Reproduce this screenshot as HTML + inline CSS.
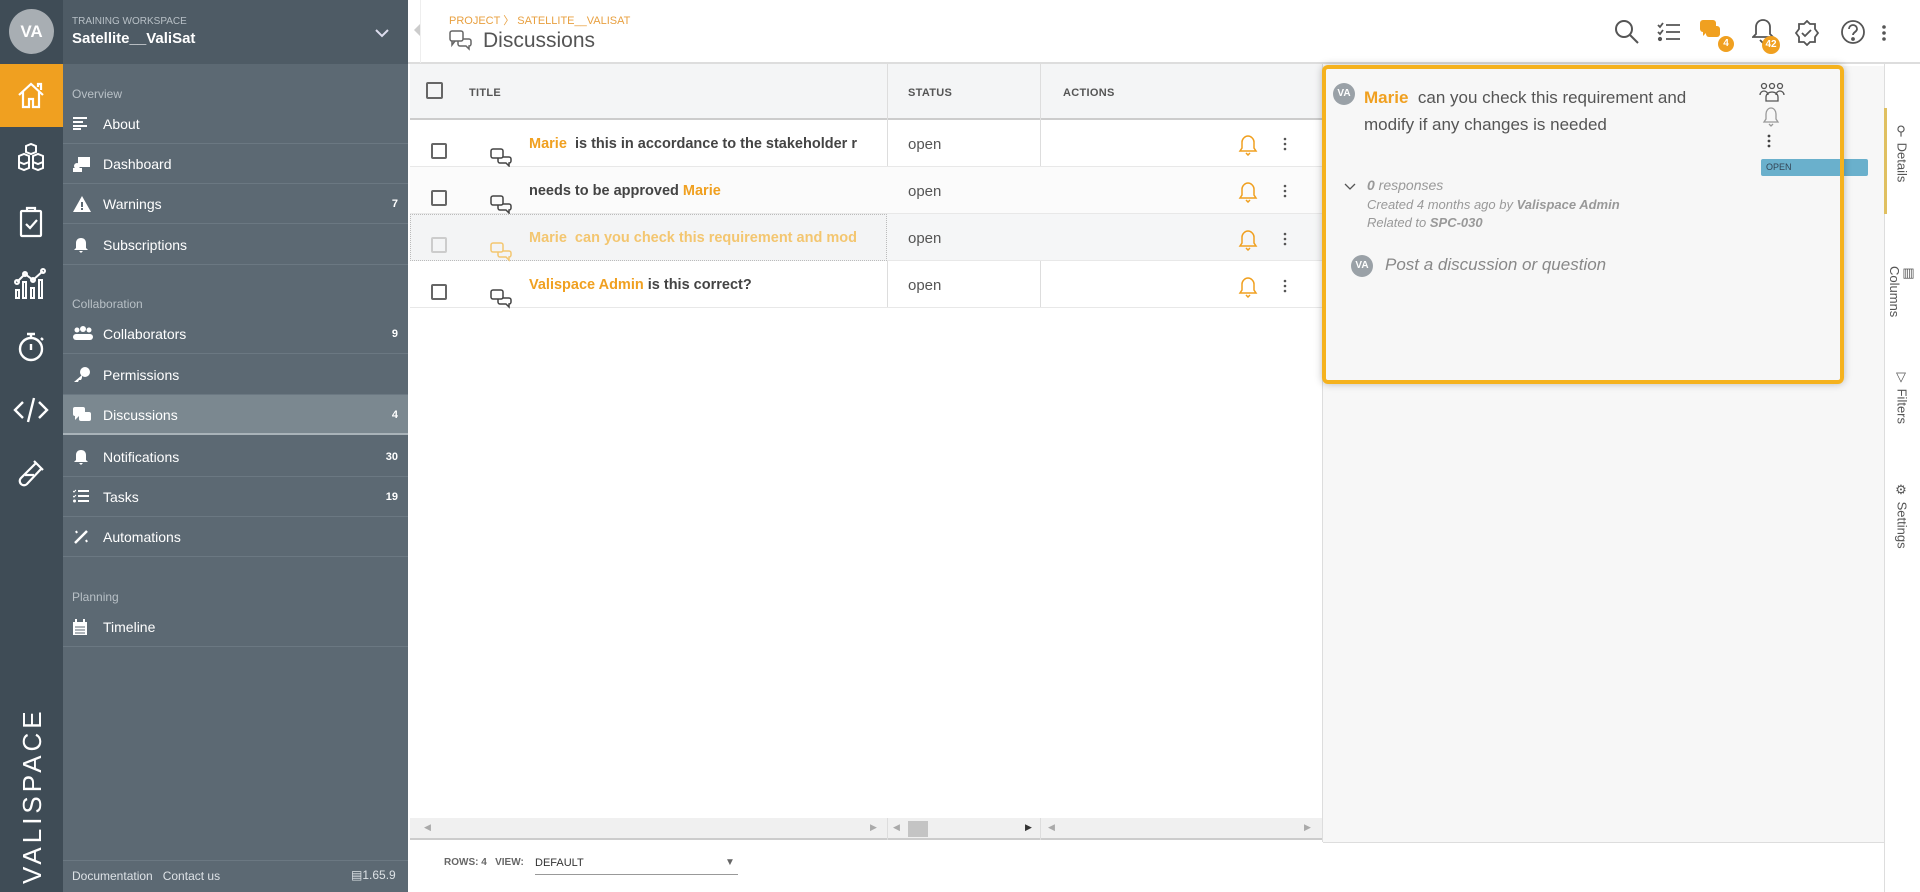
<!DOCTYPE html>
<html><head><meta charset="utf-8"><style>
*{box-sizing:border-box;margin:0;padding:0}
body{width:1920px;height:892px;overflow:hidden;font-family:"Liberation Sans",sans-serif;background:#fff;position:relative}
.a{position:absolute}
.rail{left:0;top:0;width:63px;height:892px;background:#3f4c56}
.side{left:63px;top:0;width:345px;height:892px;background:#5c6973}
.sh{left:63px;top:0;width:345px;height:64px;background:#4e5b65}
.nav{position:absolute;left:63px;width:345px;height:40px;border-bottom:1px solid #6b7882;color:#fff;font-size:14px;line-height:40px;padding-left:40px}
.nav .n{position:absolute;right:10px;top:0;font-size:11px;font-weight:bold}
.nav svg{position:absolute;left:10px;top:12px}
.lbl{position:absolute;left:72px;color:#b8c0c6;font-size:12px}
.hdr{font-size:11px;font-weight:bold;color:#555;letter-spacing:.3px}
.row{position:absolute;left:410px;width:912px;height:47px;border-bottom:1px solid #e8e8e8}
.cb{position:absolute;left:20px;top:24px;width:16px;height:16px;border:2px solid #666;border-radius:2px}
.tt{position:absolute;left:119px;top:16px;font-size:14.5px;font-weight:bold;color:#444;white-space:nowrap}
.o{color:#f0a020}
.st{position:absolute;left:498px;top:16px;font-size:15px;color:#555}
.tab{position:absolute;left:1884px;width:36px;color:#555;font-size:13px;writing-mode:vertical-rl;display:flex;align-items:center;justify-content:center}
</style></head><body>
<div class="a rail"></div>
<div class="a side"></div>
<div class="a sh"></div>
<div class="a" style="left:9px;top:9px;width:45px;height:45px;border-radius:50%;background:#a8aeb3;color:#fff;font-weight:bold;font-size:17px;line-height:45px;text-align:center">VA</div>
<div class="a" style="left:72px;top:16px;color:#b8c0c6;font-size:10px">TRAINING WORKSPACE</div>
<div class="a" style="left:72px;top:30px;color:#fff;font-size:15px;font-weight:bold">Satellite__ValiSat</div>
<svg class="a" style="left:375px;top:28px" width="14" height="10"><path d="M1 2l6 6 6-6" stroke="#dde" stroke-width="2" fill="none"/></svg>
<div class="a" style="left:0;top:64px;width:63px;height:63px;background:#f0a020"></div>
<svg class="a" style="left:16px;top:80px" width="30" height="30" viewBox="0 0 30 30" fill="none" stroke="#fff" stroke-width="2.2"><path d="M3 15L15 4l12 11M7 12v15h6v-8h4v8h6V12M22 7V4h3v6"/></svg>
<svg class="a" style="left:15px;top:142px" width="32" height="32" viewBox="0 0 32 32" fill="none" stroke="#fff" stroke-width="2"><path d="M11 4l5-2 5 2v6l-5 2-5-2zM4 14l5-2 5 2v6l-5 2-5-2zM18 14l5-2 5 2v6l-5 2-5-2zM4 20v6l5 2 5-2v-6M18 20v6l5 2 5-2v-6"/></svg>
<svg class="a" style="left:18px;top:206px" width="28" height="32" viewBox="0 0 28 32" fill="none" stroke="#fff" stroke-width="2.2"><rect x="3" y="5" width="20" height="25" rx="1"/><path d="M9 5V2h8v3M8 18l4 4 7-8"/></svg>
<svg class="a" style="left:14px;top:268px" width="34" height="32" viewBox="0 0 34 32" fill="none" stroke="#fff" stroke-width="2"><path d="M3 14l8-8 8 6 10-9"/><circle cx="3" cy="14" r="2"/><circle cx="11" cy="6" r="2"/><circle cx="19" cy="12" r="2"/><circle cx="29" cy="3" r="2"/><rect x="2" y="22" width="3" height="8"/><rect x="9" y="14" width="3" height="16"/><rect x="17" y="20" width="3" height="10"/><rect x="25" y="12" width="3" height="18"/></svg>
<svg class="a" style="left:16px;top:331px" width="30" height="32" viewBox="0 0 30 32" fill="none" stroke="#fff" stroke-width="2.4"><circle cx="15" cy="18" r="11"/><path d="M11 3h8M15 3v4M15 13v6M25 7l2 2"/></svg>
<svg class="a" style="left:13px;top:396px" width="36" height="28" viewBox="0 0 36 28" fill="none" stroke="#fff" stroke-width="2.4"><path d="M10 6L2 14l8 8M26 6l8 8-8 8M21 2l-6 24"/></svg>
<svg class="a" style="left:16px;top:458px" width="30" height="30" viewBox="0 0 30 30" fill="none" stroke="#fff" stroke-width="2.2"><path d="M18 3l9 9M20 5L5 20a4 4 0 006 6L25 11M9 17h9"/></svg>
<div class="a" style="left:8px;top:714px;width:48px;height:170px;color:#fff;font-size:26px;letter-spacing:4px;writing-mode:vertical-rl;transform:rotate(180deg);line-height:48px;text-align:center">VALISPACE</div>
<div class="lbl" style="top:87px">Overview</div>
<div class="nav" style="top:104px"><svg width="16" height="14"><path d="M0 2h14M0 6h10M0 10h14M0 13h8" stroke="#fff" stroke-width="2"/></svg>About</div>
<div class="nav" style="top:144px"><svg width="18" height="16"><rect x="5" y="1" width="12" height="10" fill="#fff"/><circle cx="4" cy="10" r="3" fill="#fff"/><rect x="0" y="12" width="9" height="4" fill="#fff"/></svg>Dashboard</div>
<div class="nav" style="top:184px"><svg width="18" height="16"><path d="M9 0L18 16H0z" fill="#fff"/><rect x="8" y="6" width="2" height="5" fill="#5c6973"/><rect x="8" y="12" width="2" height="2" fill="#5c6973"/></svg>Warnings<span class="n">7</span></div>
<div class="nav" style="top:225px"><svg width="16" height="16"><path d="M8 1c-3 0-5 2-5 5v5l-2 2h14l-2-2V6c0-3-2-5-5-5zM6 14h4l-2 2z" fill="#fff"/></svg>Subscriptions</div>
<div class="lbl" style="top:297px">Collaboration</div>
<div class="nav" style="top:314px"><svg width="20" height="14"><circle cx="4" cy="4" r="2.5" fill="#fff"/><circle cx="10" cy="3" r="3" fill="#fff"/><circle cx="16" cy="4" r="2.5" fill="#fff"/><rect x="0" y="8" width="20" height="6" rx="3" fill="#fff"/></svg>Collaborators<span class="n">9</span></div>
<div class="nav" style="top:355px"><svg width="18" height="16"><circle cx="12" cy="5" r="5" fill="#fff"/><path d="M9 8L1 15h4l1-2h2l1-2z" fill="#fff"/></svg>Permissions</div>
<div class="nav" style="top:395px;background:#7b8890;border-bottom:2px solid #a9b3b9"><svg width="18" height="16"><rect x="0" y="0" width="12" height="9" rx="2" fill="#fff"/><path d="M2 9l0 4 4-4z" fill="#fff"/><rect x="6" y="5" width="12" height="9" rx="2" fill="#fff"/></svg>Discussions<span class="n">4</span></div>
<div class="nav" style="top:437px"><svg width="16" height="16"><path d="M8 1c-3 0-5 2-5 5v5l-2 2h14l-2-2V6c0-3-2-5-5-5zM6 14h4l-2 2z" fill="#fff"/></svg>Notifications<span class="n">30</span></div>
<div class="nav" style="top:477px"><svg width="16" height="14"><path d="M5 2h11M5 7h11M5 12h11" stroke="#fff" stroke-width="2"/><path d="M0 2l1 1 2-2M0 7l1 1 2-2" stroke="#fff" fill="none"/><circle cx="1.5" cy="12" r="1.5" fill="#fff"/></svg>Tasks<span class="n">19</span></div>
<div class="nav" style="top:517px"><svg width="16" height="16"><path d="M2 14L14 2" stroke="#fff" stroke-width="2.5"/><path d="M3 2l1 2M13 11l1 2" stroke="#fff" stroke-width="2"/></svg>Automations</div>
<div class="lbl" style="top:590px">Planning</div>
<div class="nav" style="top:607px"><svg width="14" height="16"><rect x="0" y="3" width="14" height="13" fill="#fff"/><rect x="2" y="0" width="2" height="4" fill="#fff"/><rect x="10" y="0" width="2" height="4" fill="#fff"/><path d="M2 8h10M2 11h10M2 14h10" stroke="#5c6973"/></svg>Timeline</div>
<div class="a" style="left:63px;top:860px;width:345px;height:1px;background:#6b7882"></div>
<div class="a" style="left:72px;top:869px;color:#dde2e6;font-size:12px">Documentation&nbsp;&nbsp; Contact us</div>
<div class="a" style="left:351px;top:868px;color:#dde2e6;font-size:12px">▤1.65.9</div>
<div class="a" style="left:408px;top:0;width:1512px;height:64px;border-bottom:2px solid #ddd"></div>
<div class="a" style="left:420px;top:0;width:1px;height:63px;background:#eee"></div>
<svg class="a" style="left:414px;top:24px" width="6" height="12"><path d="M6 0v12L0 6z" fill="#ccc"/></svg>
<div class="a" style="left:449px;top:12px;color:#e8a040;font-size:11px">PROJECT 〉 SATELLITE__VALISAT</div>
<svg class="a" style="left:449px;top:30px" width="24" height="22" viewBox="0 0 24 22" fill="none" stroke="#666" stroke-width="1.5"><rect x="1" y="1" width="13" height="10" rx="2"/><path d="M3 11v4l3-4"/><path d="M9 11v3a2 2 0 002 2h6l3 3v-3a2 2 0 002-2v-3a2 2 0 00-2-2h-6"/></svg>
<div class="a" style="left:483px;top:29px;color:#555;font-size:21px">Discussions</div>
<svg class="a" style="left:1614px;top:19px" width="26" height="26" fill="none" stroke="#555" stroke-width="2"><circle cx="10" cy="10" r="8"/><path d="M16 16l8 8"/></svg>
<svg class="a" style="left:1657px;top:22px" width="24" height="20" fill="none" stroke="#555" stroke-width="1.8"><path d="M9 3h14M9 10h14M9 17h14M1 3l2 2 3-4M1 10l2 2 3-4"/><circle cx="3" cy="17" r="1.2" fill="#555"/></svg>
<svg class="a" style="left:1700px;top:20px" width="26" height="24"><rect x="0" y="0" width="16" height="12" rx="3" fill="#f0a020"/><path d="M3 12v4l4-4z" fill="#f0a020"/><rect x="6" y="6" width="14" height="11" rx="3" fill="#f0a020"/></svg>
<div class="a" style="left:1718px;top:36px;width:16px;height:16px;border-radius:50%;background:#f0a020;color:#fff;font-size:10px;font-weight:bold;text-align:center;line-height:16px">4</div>
<svg class="a" style="left:1752px;top:18px" width="22" height="26" fill="none" stroke="#555" stroke-width="1.8"><path d="M11 2c-4 0-7 3-7 7v7l-3 3h20l-3-3V9c0-4-3-7-7-7zM8 22l3 3 3-3"/></svg>
<div class="a" style="left:1762px;top:36px;width:18px;height:18px;border-radius:50%;background:#f0a020;color:#fff;font-size:10px;font-weight:bold;text-align:center;line-height:18px">42</div>
<svg class="a" style="left:1794px;top:20px" width="26" height="26" fill="none" stroke="#555" stroke-width="1.8"><path d="M13 1l3 3h5v5l3 4-3 4v5h-5l-3 3-3-3H5v-5l-3-4 3-4V4h5z"/><path d="M8 13l3 3 6-6"/></svg>
<svg class="a" style="left:1840px;top:19px" width="26" height="26" fill="none" stroke="#555" stroke-width="1.8"><circle cx="13" cy="13" r="11"/><path d="M9 10a4 4 0 118 0c0 3-4 3-4 6"/><circle cx="13" cy="20" r="1" fill="#555"/></svg>
<svg class="a" style="left:1881px;top:24px" width="6" height="18"><circle cx="3" cy="3" r="1.8" fill="#555"/><circle cx="3" cy="9" r="1.8" fill="#555"/><circle cx="3" cy="15" r="1.8" fill="#555"/></svg>
<div class="a" style="left:410px;top:64px;width:912px;height:56px;background:#f4f5f6;border-bottom:2px solid #ccc"></div>
<div class="a" style="left:426px;top:82px;width:17px;height:17px;border:2px solid #666;border-radius:2px"></div>
<div class="a hdr" style="left:469px;top:87px">TITLE</div>
<div class="a hdr" style="left:908px;top:87px">STATUS</div>
<div class="a hdr" style="left:1063px;top:87px">ACTIONS</div>
<div class="a" style="left:887px;top:64px;width:1px;height:244px;background:#ddd"></div>
<div class="a" style="left:1040px;top:64px;width:1px;height:244px;background:#ddd"></div>
<div class="a" style="left:1322px;top:64px;width:1px;height:778px;background:#ddd"></div>
<div class="row" style="top:120px"><div class="cb" style="left:21px;top:23px"></div>
<svg class="a" style="left:80px;top:28px" width="22" height="20" fill="none" stroke="#444" stroke-width="1.5"><rect x="1" y="1" width="12" height="9" rx="2"/><path d="M8 10v3a2 2 0 002 2h6l3 3v-3a2 2 0 002-2v-2a2 2 0 00-2-2h-6"/></svg>
<div class="tt"><span class="o">Marie</span>&nbsp; is this in accordance to the stakeholder r</div><div class="st">open</div></div>
<div class="row" style="top:167px;background:#fbfbfb"><div class="cb" style="left:21px;top:23px"></div>
<svg class="a" style="left:80px;top:28px" width="22" height="20" fill="none" stroke="#444" stroke-width="1.5"><rect x="1" y="1" width="12" height="9" rx="2"/><path d="M8 10v3a2 2 0 002 2h6l3 3v-3a2 2 0 002-2v-2a2 2 0 00-2-2h-6"/></svg>
<div class="tt">needs to be approved <span class="o">Marie</span></div><div class="st">open</div></div>
<div class="row" style="top:214px;background:#f5f6f7"><div class="a" style="left:0;top:0;width:477px;height:47px;border:1px dotted #bbb;background:#f3f4f5"></div><div class="cb" style="left:21px;top:23px;border-color:#ccc"></div>
<svg class="a" style="left:80px;top:28px" width="22" height="20" fill="none" stroke="#f3c670" stroke-width="1.5"><rect x="1" y="1" width="12" height="9" rx="2"/><path d="M8 10v3a2 2 0 002 2h6l3 3v-3a2 2 0 002-2v-2a2 2 0 00-2-2h-6"/></svg>
<div class="tt" style="color:#f3c670">Marie&nbsp; can you check this requirement and mod</div><div class="st">open</div></div>
<div class="row" style="top:261px"><div class="cb" style="left:21px;top:23px"></div>
<svg class="a" style="left:80px;top:28px" width="22" height="20" fill="none" stroke="#444" stroke-width="1.5"><rect x="1" y="1" width="12" height="9" rx="2"/><path d="M8 10v3a2 2 0 002 2h6l3 3v-3a2 2 0 002-2v-2a2 2 0 00-2-2h-6"/></svg>
<div class="tt"><span class="o">Valispace Admin</span> is this correct?</div><div class="st">open</div></div>
<div class="a" style="left:1238px;top:134px"><svg width="20" height="22" fill="none" stroke="#f0a020" stroke-width="1.5"><path d="M10 2c-3 0-6 3-6 6v6l-2 3h16l-2-3V8c0-3-3-6-6-6zM8 19l2 2 2-2"/></svg></div>
<div class="a" style="left:1238px;top:181px"><svg width="20" height="22" fill="none" stroke="#f0a020" stroke-width="1.5"><path d="M10 2c-3 0-6 3-6 6v6l-2 3h16l-2-3V8c0-3-3-6-6-6zM8 19l2 2 2-2"/></svg></div>
<div class="a" style="left:1238px;top:229px"><svg width="20" height="22" fill="none" stroke="#f0a020" stroke-width="1.5"><path d="M10 2c-3 0-6 3-6 6v6l-2 3h16l-2-3V8c0-3-3-6-6-6zM8 19l2 2 2-2"/></svg></div>
<div class="a" style="left:1238px;top:276px"><svg width="20" height="22" fill="none" stroke="#f0a020" stroke-width="1.5"><path d="M10 2c-3 0-6 3-6 6v6l-2 3h16l-2-3V8c0-3-3-6-6-6zM8 19l2 2 2-2"/></svg></div>
<svg class="a" style="left:1283px;top:137px" width="4" height="14"><circle cx="2" cy="2" r="1.3" fill="#555"/><circle cx="2" cy="7" r="1.3" fill="#555"/><circle cx="2" cy="12" r="1.3" fill="#555"/></svg>
<svg class="a" style="left:1283px;top:184px" width="4" height="14"><circle cx="2" cy="2" r="1.3" fill="#555"/><circle cx="2" cy="7" r="1.3" fill="#555"/><circle cx="2" cy="12" r="1.3" fill="#555"/></svg>
<svg class="a" style="left:1283px;top:232px" width="4" height="14"><circle cx="2" cy="2" r="1.3" fill="#555"/><circle cx="2" cy="7" r="1.3" fill="#555"/><circle cx="2" cy="12" r="1.3" fill="#555"/></svg>
<svg class="a" style="left:1283px;top:279px" width="4" height="14"><circle cx="2" cy="2" r="1.3" fill="#555"/><circle cx="2" cy="7" r="1.3" fill="#555"/><circle cx="2" cy="12" r="1.3" fill="#555"/></svg>
<div class="a" style="left:410px;top:818px;width:912px;height:22px;background:#f0f0f0;border-bottom:2px solid #ccc"></div>
<div class="a" style="left:887px;top:818px;width:1px;height:22px;background:#ddd"></div>
<div class="a" style="left:1040px;top:818px;width:1px;height:22px;background:#ddd"></div>
<div class="a" style="left:908px;top:821px;width:20px;height:16px;background:#c4c4c4"></div>
<div class="a" style="left:424px;top:822px;color:#aaa;font-size:9px">◀</div>
<div class="a" style="left:870px;top:822px;color:#aaa;font-size:9px">▶</div>
<div class="a" style="left:893px;top:822px;color:#aaa;font-size:9px">◀</div>
<div class="a" style="left:1025px;top:822px;color:#333;font-size:9px">▶</div>
<div class="a" style="left:1048px;top:822px;color:#aaa;font-size:9px">◀</div>
<div class="a" style="left:1304px;top:822px;color:#aaa;font-size:9px">▶</div>
<div class="a" style="left:444px;top:857px;font-size:10px;font-weight:bold;color:#666">ROWS: 4&nbsp;&nbsp; VIEW:</div>
<div class="a" style="left:535px;top:857px;font-size:11px;color:#333">DEFAULT</div>
<div class="a" style="left:725px;top:857px;font-size:10px;color:#666">▼</div>
<div class="a" style="left:535px;top:874px;width:203px;height:1px;background:#999"></div>
<div class="a" style="left:1323px;top:66px;width:561px;height:776px;background:#f7f7f7"></div>
<div class="a" style="left:1884px;top:64px;width:36px;height:828px;background:#fff;border-left:1px solid #ddd"></div>
<div class="a" style="left:1323px;top:842px;width:561px;height:1px;background:#ddd"></div>
<div class="a" style="left:1761px;top:159px;width:107px;height:17px;background:#6ab0cc;border-radius:2px;color:#345;font-size:9px;line-height:17px;padding-left:5px">OPEN</div>
<div class="a" style="left:1322px;top:65px;width:522px;height:319px;border:4px solid #f5b21e;border-radius:6px;box-shadow:0 0 8px rgba(0,0,0,.25)"></div>
<div class="a" style="left:1333px;top:83px;width:22px;height:22px;border-radius:50%;background:#9aa1a7;color:#fff;font-size:10px;font-weight:bold;text-align:center;line-height:22px">VA</div>
<div class="a" style="left:1364px;top:84px;font-size:17px;color:#555;line-height:27px;width:360px"><b class="o">Marie</b>&nbsp; can you check this requirement and modify if any changes is needed</div>
<svg class="a" style="left:1759px;top:82px" width="26" height="20" fill="none" stroke="#555" stroke-width="1.3"><circle cx="5" cy="4" r="2.5"/><circle cx="13" cy="4" r="2.5"/><circle cx="21" cy="4" r="2.5"/><path d="M1 13a4 4 0 018 0M17 13a4 4 0 018 0M7 19v-4a6 5 0 0112 0v4z"/></svg>
<svg class="a" style="left:1762px;top:106px" width="18" height="22" fill="none" stroke="#999" stroke-width="1.3"><path d="M9 2c-3 0-5 3-5 6v5l-2 3h14l-2-3V8c0-3-2-6-5-6zM7 18l2 2 2-2"/></svg>
<svg class="a" style="left:1767px;top:134px" width="4" height="14"><circle cx="2" cy="2" r="1.4" fill="#444"/><circle cx="2" cy="7" r="1.4" fill="#444"/><circle cx="2" cy="12" r="1.4" fill="#444"/></svg>
<svg class="a" style="left:1344px;top:183px" width="12" height="8"><path d="M1 1l5 5 5-5" stroke="#555" fill="none" stroke-width="1.3"/></svg>
<div class="a" style="left:1367px;top:177px;font-size:14px;color:#999;font-style:italic"><b>0</b> responses</div>
<div class="a" style="left:1367px;top:197px;font-size:13px;color:#999;font-style:italic">Created 4 months ago by <b>Valispace Admin</b></div>
<div class="a" style="left:1367px;top:215px;font-size:13px;color:#999;font-style:italic">Related to <b>SPC-030</b></div>
<div class="a" style="left:1351px;top:255px;width:22px;height:22px;border-radius:50%;background:#9aa1a7;color:#fff;font-size:10px;font-weight:bold;text-align:center;line-height:22px">VA</div>
<div class="a" style="left:1385px;top:255px;font-size:17px;color:#888;font-style:italic">Post a discussion or question</div>
<div class="a" style="left:1884px;top:108px;width:3px;height:106px;background:#e0c060"></div>
<div class="tab" style="top:118px;height:70px">⚲ Details</div>
<div class="tab" style="top:268px;height:48px">▥ Columns</div>
<div class="tab" style="top:366px;height:62px">▽ Filters</div>
<div class="tab" style="top:478px;height:76px">⚙ Settings</div>
</body></html>
